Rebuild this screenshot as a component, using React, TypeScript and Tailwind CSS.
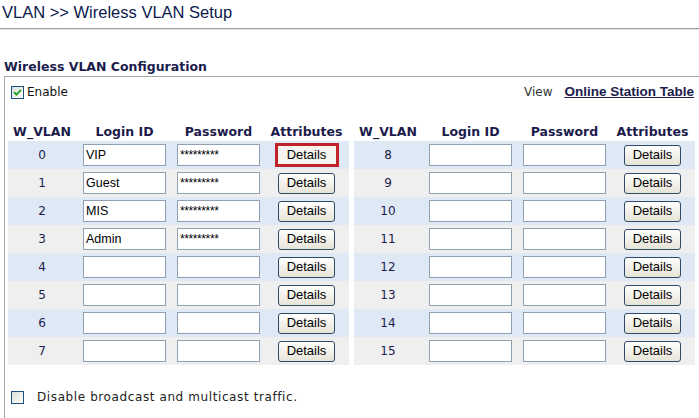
import React from 'react';

const rowsLeft = [
  { id: 0, login: 'VIP', pass: true },
  { id: 1, login: 'Guest', pass: true },
  { id: 2, login: 'MIS', pass: true },
  { id: 3, login: 'Admin', pass: true },
  { id: 4, login: '', pass: false },
  { id: 5, login: '', pass: false },
  { id: 6, login: '', pass: false },
  { id: 7, login: '', pass: false },
];

const rowsRight = [8, 9, 10, 11, 12, 13, 14, 15].map((id) => ({ id, login: '', pass: false }));

const verdana = "font-['DejaVu_Sans',Verdana,sans-serif]";
const arial = "font-['Liberation_Sans',Arial,sans-serif]";

const Check: React.FC<{ checked?: boolean }> = ({ checked }) => (
  <span className="w-[13px] h-[13px] border border-[#1c5180] bg-gradient-to-br from-[#dcdcd7] to-white flex items-center justify-center shrink-0">
    {checked && (
      <svg width="9" height="9" viewBox="0 0 9 9">
        <path d="M1 4.2 L3.4 6.6 L8 1.8" stroke="#21a121" strokeWidth="1.8" fill="none" />
      </svg>
    )}
  </span>
);

const Details: React.FC<{ active?: boolean }> = ({ active }) =>
  active ? (
    <div className="border-[3px] border-[#c0222c] w-[64px] h-[24px] flex items-center justify-center bg-[#f6f4ee]">
      <span className={`${arial} text-[13px] text-black`}>Details</span>
    </div>
  ) : (
    <div className="w-[57px] h-[21px] rounded-[3px] border border-[#2f4a66] bg-gradient-to-b from-white to-[#e6e3d6] flex items-center justify-center">
      <span className={`${arial} text-[13px] text-black`}>Details</span>
    </div>
  );

const Input: React.FC<{ value?: string; pass?: boolean }> = ({ value, pass }) => (
  <div className="w-[83px] h-[22px] border border-[#8fa1b3] bg-white flex items-center px-[2px]">
    {pass ? (
      <span className={`${arial} text-[12px] text-black leading-none tracking-[-0.4px]`}>*********</span>
    ) : (
      <span className={`${arial} text-[12.5px] text-black`}>{value}</span>
    )}
  </div>
);

const VlanTable: React.FC<{ rows: { id: number; login: string; pass: boolean }[]; first?: boolean }> = ({ rows, first }) => (
  <div className="w-[341px]">
    <div className={`grid grid-cols-[68px_97px_91px_85px] h-[18px] items-center text-[12.5px] font-bold text-[#1c1c4c] ${verdana}`}>
      <div className="text-center">W_VLAN</div>
      <div className="text-center">Login ID</div>
      <div className="text-center">Password</div>
      <div className="text-center">Attributes</div>
    </div>
    {rows.map((r, i) => (
      <div
        key={r.id}
        className={`grid grid-cols-[68px_97px_91px_85px] h-[28px] items-center ${i % 2 === 0 ? 'bg-[#dfe9f6]' : 'bg-[#efefef]'}`}
      >
        <div className={`text-center text-[12px] text-[#1c1c4c] ${verdana}`}>{r.id}</div>
        <div className="flex justify-center">
          <Input value={r.login} />
        </div>
        <div className="flex justify-center">
          <Input pass={r.pass} />
        </div>
        <div className="flex justify-center">
          <Details active={first && i === 0} />
        </div>
      </div>
    ))}
  </div>
);

export default function App() {
  return (
    <div className="w-[699px] h-[418px] bg-white overflow-hidden">
      <div className={`${arial} text-[16.5px] text-[#0c1a4e] pl-[2px] h-[28px]`}>VLAN &gt;&gt; Wireless VLAN Setup</div>
      <div className="h-[1px] bg-[#9c9c9c]" />
      <div className="h-[1px] bg-[#e4e4e4]" />
      <div className={`${verdana} font-bold text-[12.5px] text-[#1c1c4c] pl-[4px] mt-[28px] h-[18px]`}>Wireless VLAN Configuration</div>
      <div className="ml-[4px] border-l border-t border-[#aaaaaa] h-[343px]">
        <div className="flex items-center justify-between pt-[8px] pl-[6px] pr-[5px] h-[22px]">
          <div className="flex items-center gap-[3px]">
            <Check checked />
            <span className={`${verdana} text-[12px] text-[#111]`}>Enable</span>
          </div>
          <div className="flex items-center gap-[12px]">
            <span className={`${verdana} text-[12px] text-[#333]`}>View</span>
            <span className={`${arial} font-bold text-[13.5px] text-[#1c1c4c] underline`}>Online Station Table</span>
          </div>
        </div>
        <div className="flex gap-[5px] pl-[3px] mt-[24px]">
          <VlanTable rows={rowsLeft} first />
          <VlanTable rows={rowsRight} />
        </div>
        <div className="flex items-center pl-[6px] mt-[23px] gap-[13px]">
          <Check />
          <span className={`${verdana} text-[12px] tracking-[0.6px] text-[#222]`}>Disable broadcast and multicast traffic.</span>
        </div>
      </div>
    </div>
  );
}
